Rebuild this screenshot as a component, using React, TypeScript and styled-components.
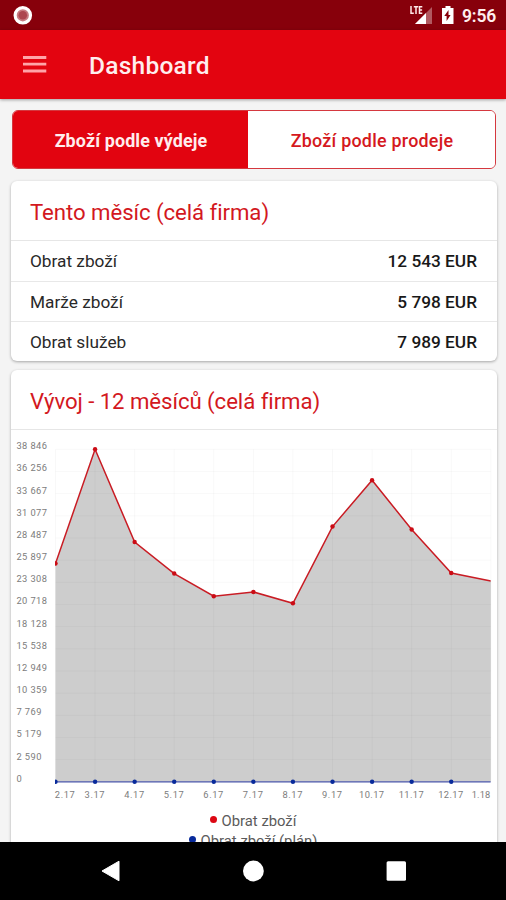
import React from 'react';
import styled, { createGlobalStyle } from 'styled-components';

const GlobalStyle = createGlobalStyle`
  * { box-sizing: border-box; }
  body { margin: 0; background: #f4f4f4; font-family: Roboto, "Liberation Sans", sans-serif; }
`;

const Screen = styled.div`
  display: flex;
  flex-direction: column;
  width: 506px;
  height: 900px;
  overflow: hidden;
  background: #f4f4f4;
`;

const StatusBar = styled.header`
  display: flex;
  align-items: center;
  flex: 0 0 30px;
  padding: 0 9px 0 13px;
  background: #87000b;
  color: #fff;
`;

const StatusIcons = styled.svg`
  margin-left: auto;
`;

const Clock = styled.time`
  width: 35px;
  margin: 2px 0 0 6px;
  font-size: 17.5px;
  font-weight: 600;
  line-height: 28px;
  letter-spacing: -0.15px;
  color: #ffeeee;
`;

const AppBar = styled.div`
  display: flex;
  align-items: center;
  flex: 0 0 69px;
  padding: 1px 23px 0;
  background: #e30410;
  box-shadow: 0 1px 3px rgba(0, 0, 0, 0.35);
`;

const MenuButton = styled.button`
  display: flex;
  width: 24px;
  height: 24px;
  padding: 0;
  border: 0;
  background: none;
`;

const Title = styled.h1`
  margin: 2px 0 0 42px;
  font-size: 24.5px;
  font-weight: 500;
  line-height: 32px;
  letter-spacing: 0.25px;
  color: #ffeeee;
`;

const Content = styled.main`
  display: flex;
  flex-direction: column;
  flex: 1 1 0;
  min-height: 0;
  padding: 11px 9px 0 11px;
  overflow: hidden;
`;

const Segments = styled.div`
  display: grid;
  grid-template-columns: 235px 1fr;
  flex: 0 0 59px;
  margin: 0 1px;
  border: 1px solid #d5383f;
  border-radius: 6px;
  overflow: hidden;
`;

const Segment = styled.button<{ $active?: boolean }>`
  padding: 2px 0 0 1px;
  border: 0;
  background: ${(p) => (p.$active ? '#e20410' : '#fff')};
  color: ${(p) => (p.$active ? '#ffeded' : '#d51820')};
  font-family: inherit;
  font-size: 17.9px;
  font-weight: ${(p) => (p.$active ? 700 : 500)};
  letter-spacing: ${(p) => (p.$active ? '0.13px' : '0.24px')};
`;

const Card = styled.section<{ $gap: number; $height?: number }>`
  flex: none;
  margin-top: ${(p) => p.$gap}px;
  height: ${(p) => (p.$height ? `${p.$height}px` : 'auto')};
  background: #fff;
  border-radius: 6px;
  box-shadow: 0 1px 3px rgba(0, 0, 0, 0.32);
`;

const CardTitle = styled.h2`
  margin: 0;
  padding: 2px 19px 0;
  height: 60px;
  border-bottom: 1px solid #e6e6e6;
  font-size: 22.2px;
  font-weight: 400;
  line-height: 59px;
  letter-spacing: -0.06px;
  color: #d3181e;
`;

const Row = styled.div`
  display: flex;
  justify-content: space-between;
  height: 40.2px;
  padding: 0 20px 0 19px;
  font-size: 17.25px;
  line-height: 41px;
  color: #292929;

  & + & { border-top: 1px solid #e8e8e8; }
`;

const Amount = styled.strong`
  font-weight: 500;
  color: #181818;
`;

const AxisText = styled.text`
  font-size: 9.3px;
  fill: #7c7c7c;
`;

const Legend = styled.ul`
  display: flex;
  flex-direction: column;
  align-items: center;
  margin: 0 2px 0 0;
  padding: 0;
  list-style: none;
`;

const LegendItem = styled.li<{ $color: string }>`
  display: flex;
  align-items: center;
  gap: 5px;
  height: 20px;
  font-size: 14.8px;
  color: #5b5b5b;

  &::before {
    content: "";
    width: 7px;
    height: 7px;
    margin-top: -2px;
    border-radius: 50%;
    background: ${(p) => p.$color};
  }
`;

const NavBar = styled.nav`
  display: grid;
  grid-template-columns: repeat(3, 142.5px);
  justify-content: center;
  align-items: center;
  flex: 0 0 58px;
  background: #000;
`;

const NavButton = styled.button`
  display: flex;
  justify-content: center;
  padding: 0;
  border: 0;
  background: none;
`;

const summary = [
  ['Obrat zboží', '12 543 EUR'],
  ['Marže zboží', '5 798 EUR'],
  ['Obrat služeb', '7 989 EUR'],
];

const ticks = ['38 846', '36 256', '33 667', '31 077', '28 487', '25 897', '23 308', '20 718',
  '18 128', '15 538', '12 949', '10 359', '7 769', '5 179', '2 590', '0'];

const months = ['2.17', '3.17', '4.17', '5.17', '6.17', '7.17', '8.17', '9.17', '10.17', '11.17', '12.17', '1.18'];

const turnover = [25500, 38846, 28020, 24330, 21680, 22180, 20860, 29820, 35230, 29480, 24390, 23460];

const LEFT = 44.5;
const RIGHT = 479.8;
const TOP = 19.3;
const BASE = 351.8;
const STEP = (RIGHT - LEFT) / 11;

const px = (i: number) => LEFT + i * STEP;
const py = (v: number) => BASE - (v / 38846) * (BASE - TOP);
const labelX = (i: number) => (i === 0 ? 53.8 : i === 11 ? 470 : px(i) - 0.5);

function Chart() {
  const line = turnover.map((v, i) => `${px(i)},${py(v)}`).join(' ');
  return (
    <svg width="486" height="381" viewBox="0 0 486 381" display="block">
      <clipPath id="plot"><rect x={LEFT - 0.5} y="0" width={RIGHT - LEFT + 0.5} height="380" /></clipPath>
      <polygon points={`${LEFT},${BASE} ${line} ${RIGHT},${BASE}`} fill="#cdcdcd" />
      <g stroke="#000" strokeOpacity="0.028">
        {ticks.map((t, i) => {
          const y = TOP + (i * (BASE - TOP)) / 15;
          return <line key={t} x1={LEFT} x2={RIGHT} y1={y} y2={y} />;
        })}
        {months.map((m, i) => <line key={m} x1={px(i)} x2={px(i)} y1={TOP} y2={BASE} />)}
      </g>
      <g clipPath="url(#plot)">
        <polyline points={line} fill="none" stroke="#c91c24" strokeWidth="1.5" />
        {turnover.slice(0, 11).map((v, i) => <circle key={i} cx={px(i)} cy={py(v)} r="2.2" fill="#cb0c15" />)}
        <line x1={LEFT} x2={RIGHT} y1={BASE} y2={BASE} stroke="#4b57ab" strokeWidth="1.3" />
        {turnover.slice(0, 11).map((_, i) => <circle key={i} cx={px(i)} cy={BASE} r="2.2" fill="#082a9b" />)}
      </g>
      {ticks.map((t, i) => (
        <AxisText key={t} x="5.4" y={19.2 + i * 22.17} textLength={t.length === 6 ? 30.5 : t.length === 5 ? 25 : 5.4}>{t}</AxisText>
      ))}
      {months.map((m, i) => (
        <AxisText key={m} x={labelX(i)} y="368.2" textAnchor="middle" textLength={i === 11 ? 18.5 : m.length === 5 ? 25 : 20}>{m}</AxisText>
      ))}
    </svg>
  );
}

export default function App() {
  return (
    <>
      <GlobalStyle />
      <Screen>
        <StatusBar>
          <svg width="20" height="20" viewBox="0 0 20 20">
            <circle cx="9.8" cy="10.3" r="7.7" fill="#c77b82" stroke="#fff" strokeWidth="3.2" />
            <circle cx="9.8" cy="10.3" r="4.3" fill="#ad4650" />
          </svg>
          <StatusIcons width="46" height="24" viewBox="0 0 46 24" fill="#fff">
            <path d="M5 21 22 4v17Z" opacity="0.35" />
            <path d="M5 21 16 10v11Z" />
            <path d="M0 3h13v8.7H0Z" fill="#87000b" />
            <path d="M1 3v7.2h2.8M3.8 3.7h4.4M6 3.7v7.2M12.3 3.7H9.5v6.5h2.8M9.5 7h2.6" fill="none" stroke="#ffe8e8" strokeWidth="1.5" />
            <path d="M35.5 3h5v2h3v16H32V5h3.5Z" />
            <path d="m38.5 7-4.2 6h2.3v5l4-6h-2.1Z" fill="#87000b" />
          </StatusIcons>
          <Clock>9:56</Clock>
        </StatusBar>
        <AppBar>
          <MenuButton aria-label="Menu">
            <svg width="24" height="24" viewBox="0 0 24 24" fill="#ffa4a8">
              <path d="M0 3h23.3v2.9H0zM0 9.7h23.3v2.9H0zM0 16.5h23.3v2.9H0z" />
            </svg>
          </MenuButton>
          <Title>Dashboard</Title>
        </AppBar>
        <Content>
          <Segments>
            <Segment $active>Zboží podle výdeje</Segment>
            <Segment>Zboží podle prodeje</Segment>
          </Segments>
          <Card $gap={11.6}>
            <CardTitle>Tento měsíc (celá firma)</CardTitle>
            {summary.map(([name, value]) => (
              <Row key={name}><span>{name}</span><Amount>{value}</Amount></Row>
            ))}
          </Card>
          <Card $gap={8.8} $height={520}>
            <CardTitle>Vývoj - 12 měsíců (celá firma)</CardTitle>
            <Chart />
            <Legend>
              <LegendItem $color="#dc0713">Obrat zboží</LegendItem>
              <LegendItem $color="#082a9b">Obrat zboží (plán)</LegendItem>
            </Legend>
          </Card>
        </Content>
        <NavBar>
          <NavButton aria-label="Zpět">
            <svg width="20" height="22" viewBox="0 0 20 22"><path d="M1 11 18 1.2v19.6Z" fill="#fff" stroke="#fff" strokeLinejoin="round" /></svg>
          </NavButton>
          <NavButton aria-label="Domů">
            <svg width="22" height="22" viewBox="0 0 22 22"><circle cx="11.4" cy="11" r="10.4" fill="#fff" /></svg>
          </NavButton>
          <NavButton aria-label="Poslední aplikace">
            <svg width="20" height="22" viewBox="0 0 20 22"><rect x="0.6" y="1.3" width="19.4" height="19.4" rx="1.5" fill="#fff" /></svg>
          </NavButton>
        </NavBar>
      </Screen>
    </>
  );
}
